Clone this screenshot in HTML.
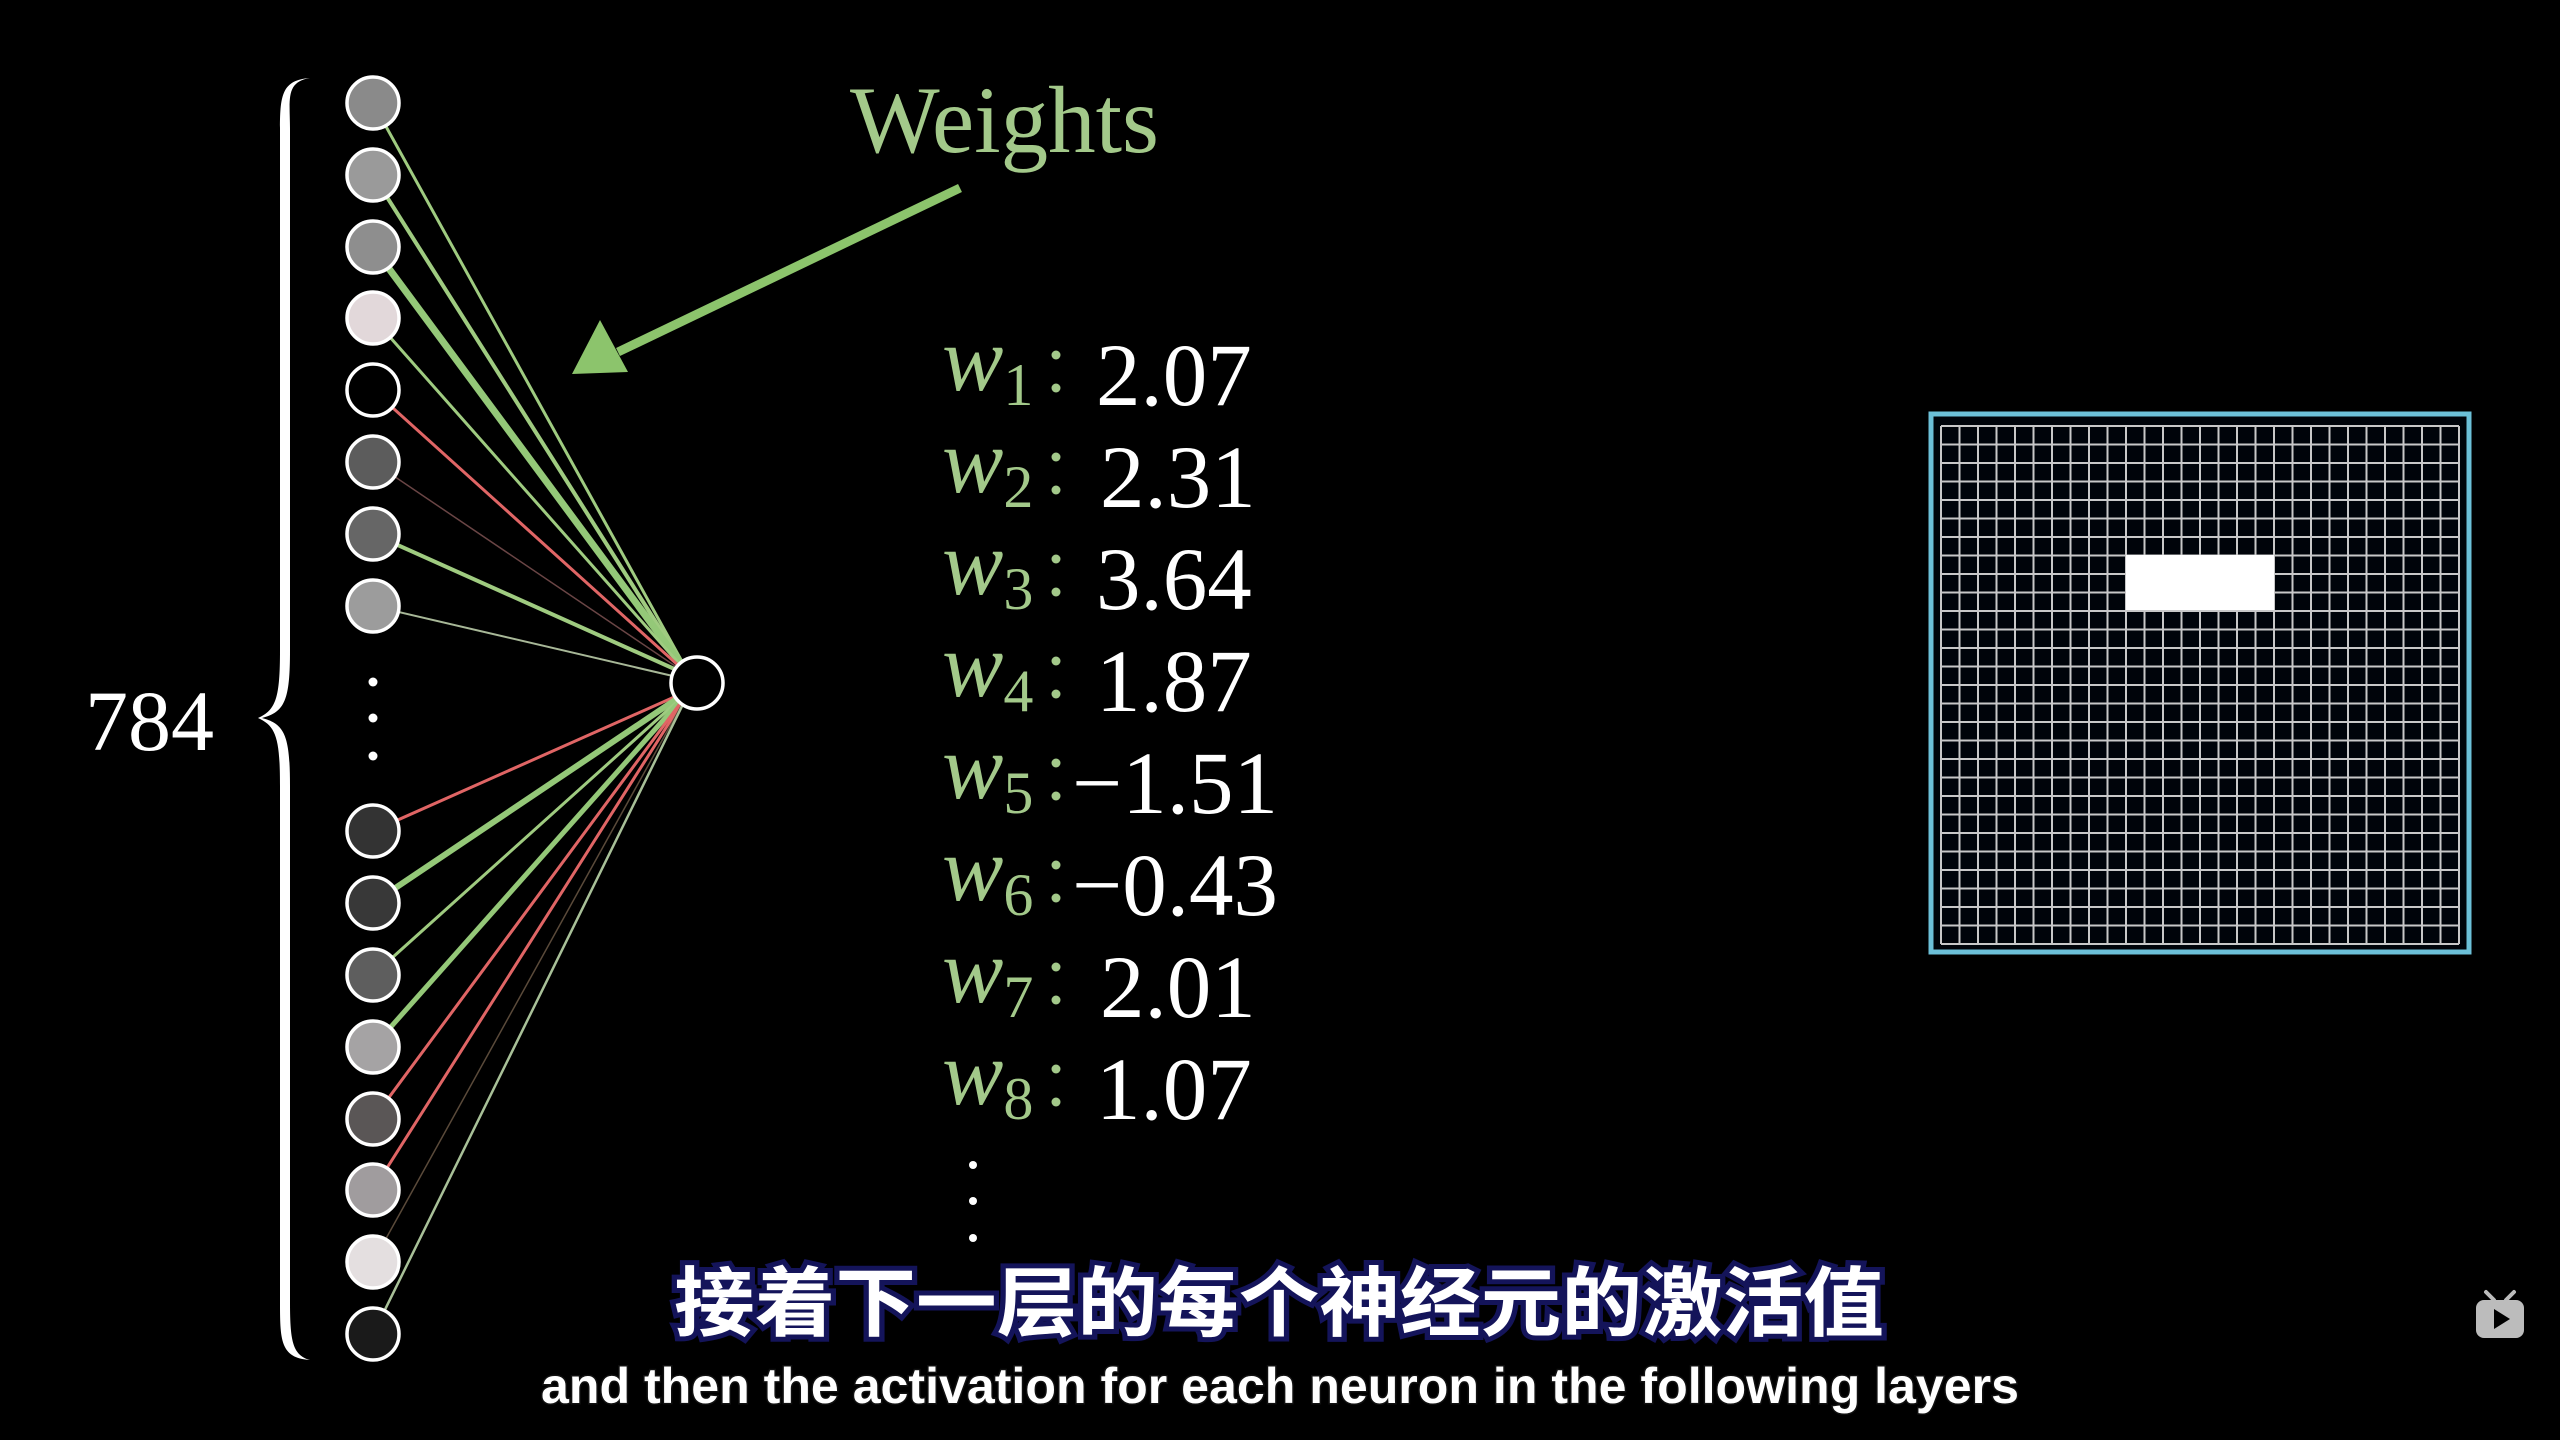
<!DOCTYPE html>
<html><head><meta charset="utf-8"><style>
html,body{margin:0;padding:0;background:#000;width:2560px;height:1440px;overflow:hidden}
svg{display:block}
</style></head><body>
<svg width="2560" height="1440" viewBox="0 0 2560 1440" xmlns="http://www.w3.org/2000/svg">
<rect width="2560" height="1440" fill="#000"/>
<path d="M310 78 C285 82 290 100 290 130 L290 650 C290 700 285 712 262 718 C285 724 290 736 290 786 L290 1300 C290 1340 292 1355 310 1360 C280 1358 280 1340 280 1300 L280 786 C280 738 276 726 258 718 C276 710 280 698 280 650 L280 130 C280 95 282 80 310 78 Z" fill="#fff"/>
<text x="85" y="750" font-family="Liberation Serif, serif" font-size="86" fill="#fff">784</text>
<g stroke-linecap="round">
<line x1="373" y1="103" x2="690" y2="676" stroke="#9fcb80" stroke-width="3"/>
<line x1="373" y1="175" x2="690" y2="676" stroke="#9fcb80" stroke-width="4"/>
<line x1="373" y1="247" x2="690" y2="676" stroke="#94c878" stroke-width="7"/>
<line x1="373" y1="318" x2="690" y2="676" stroke="#9fcb80" stroke-width="3"/>
<line x1="373" y1="390" x2="690" y2="676" stroke="#e06565" stroke-width="3"/>
<line x1="373" y1="462" x2="690" y2="676" stroke="#6a4545" stroke-width="1.5"/>
<line x1="373" y1="534" x2="690" y2="676" stroke="#9fcb80" stroke-width="4"/>
<line x1="373" y1="606" x2="690" y2="680" stroke="#a8b898" stroke-width="2"/>
<line x1="373" y1="831" x2="690" y2="690" stroke="#e06565" stroke-width="3"/>
<line x1="373" y1="903" x2="690" y2="690" stroke="#94c878" stroke-width="6"/>
<line x1="373" y1="975" x2="690" y2="690" stroke="#9fcb80" stroke-width="3"/>
<line x1="373" y1="1047" x2="690" y2="690" stroke="#94c878" stroke-width="5"/>
<line x1="373" y1="1119" x2="690" y2="690" stroke="#e06565" stroke-width="3"/>
<line x1="373" y1="1190" x2="690" y2="690" stroke="#e06565" stroke-width="3"/>
<line x1="373" y1="1262" x2="690" y2="690" stroke="#5a4a3a" stroke-width="1.5"/>
<line x1="373" y1="1334" x2="690" y2="690" stroke="#a8c098" stroke-width="2.5"/>
</g>
<g stroke="#fff" stroke-width="3.5">
<circle cx="373" cy="103" r="26" fill="#8a8a8a"/>
<circle cx="373" cy="175" r="26" fill="#9a9a9a"/>
<circle cx="373" cy="247" r="26" fill="#8e8e8e"/>
<circle cx="373" cy="318" r="26" fill="#e2d8da"/>
<circle cx="373" cy="390" r="26" fill="#000"/>
<circle cx="373" cy="462" r="26" fill="#5c5c5c"/>
<circle cx="373" cy="534" r="26" fill="#666"/>
<circle cx="373" cy="606" r="26" fill="#9c9c9c"/>
<circle cx="373" cy="831" r="26" fill="#333"/>
<circle cx="373" cy="903" r="26" fill="#383838"/>
<circle cx="373" cy="975" r="26" fill="#5e5e5e"/>
<circle cx="373" cy="1047" r="26" fill="#a5a3a4"/>
<circle cx="373" cy="1119" r="26" fill="#5a5656"/>
<circle cx="373" cy="1190" r="26" fill="#a09c9e"/>
<circle cx="373" cy="1262" r="26" fill="#e4dfe0"/>
<circle cx="373" cy="1334" r="26" fill="#1a1a1a"/>
<circle cx="697" cy="683" r="26" fill="#000"/>
</g>
<g fill="#fff"><circle cx="373" cy="682" r="4.5"/><circle cx="373" cy="718" r="4.5"/><circle cx="373" cy="756" r="4.5"/></g>
<text x="850" y="152" font-family="Liberation Serif, serif" font-size="95" fill="#a3c98a">Weights</text>
<line x1="960" y1="188" x2="618" y2="352" stroke="#8cc46c" stroke-width="9"/>
<polygon points="572,374 600,320 628,372" fill="#8cc46c"/>
<g font-family="Liberation Serif, serif" font-size="92">
<g fill="#a3c98a" font-style="italic">
<text x="942" y="390">w<tspan font-size="60" font-style="normal" dy="15">1</tspan></text>
<text x="942" y="492">w<tspan font-size="60" font-style="normal" dy="15">2</tspan></text>
<text x="942" y="594">w<tspan font-size="60" font-style="normal" dy="15">3</tspan></text>
<text x="942" y="696">w<tspan font-size="60" font-style="normal" dy="15">4</tspan></text>
<text x="942" y="798">w<tspan font-size="60" font-style="normal" dy="15">5</tspan></text>
<text x="942" y="900">w<tspan font-size="60" font-style="normal" dy="15">6</tspan></text>
<text x="942" y="1002">w<tspan font-size="60" font-style="normal" dy="15">7</tspan></text>
<text x="942" y="1104">w<tspan font-size="60" font-style="normal" dy="15">8</tspan></text>
</g>
<g fill="#a3c98a">
<circle cx="1056" cy="355" r="4.5"/><circle cx="1056" cy="388" r="4.5"/>
<circle cx="1056" cy="457" r="4.5"/><circle cx="1056" cy="490" r="4.5"/>
<circle cx="1056" cy="559" r="4.5"/><circle cx="1056" cy="592" r="4.5"/>
<circle cx="1056" cy="661" r="4.5"/><circle cx="1056" cy="694" r="4.5"/>
<circle cx="1056" cy="763" r="4.5"/><circle cx="1056" cy="796" r="4.5"/>
<circle cx="1056" cy="865" r="4.5"/><circle cx="1056" cy="898" r="4.5"/>
<circle cx="1056" cy="967" r="4.5"/><circle cx="1056" cy="1000" r="4.5"/>
<circle cx="1056" cy="1069" r="4.5"/><circle cx="1056" cy="1102" r="4.5"/>
</g>
<g fill="#fff" font-size="89">
<text x="1096" y="405">2.07</text>
<text x="1100" y="507">2.31</text>
<text x="1096" y="609">3.64</text>
<text x="1096" y="711">1.87</text>
<text x="1072" y="813">−1.51</text>
<text x="1072" y="915">−0.43</text>
<text x="1100" y="1017">2.01</text>
<text x="1096" y="1119">1.07</text>
</g>
</g>
<g fill="#fff"><circle cx="973" cy="1165" r="4"/><circle cx="973" cy="1201" r="4"/><circle cx="973" cy="1238" r="4"/></g>
<rect x="1931" y="414" width="538" height="538" fill="#00040a" stroke="#6cc0d8" stroke-width="5"/>
<g stroke="#c8c8c8" stroke-width="2">
<path d="M1941 426H2459M1941 444.5H2459M1941 463H2459M1941 481.5H2459M1941 500H2459M1941 518.5H2459M1941 537H2459M1941 555.5H2459M1941 574H2459M1941 592.5H2459M1941 611H2459M1941 629.5H2459M1941 648H2459M1941 666.5H2459M1941 685H2459M1941 703.5H2459M1941 722H2459M1941 740.5H2459M1941 759H2459M1941 777.5H2459M1941 796H2459M1941 814.5H2459M1941 833H2459M1941 851.5H2459M1941 870H2459M1941 888.5H2459M1941 907H2459M1941 925.5H2459M1941 944H2459"/>
<path d="M1941 426V944M1959.5 426V944M1978 426V944M1996.5 426V944M2015 426V944M2033.5 426V944M2052 426V944M2070.5 426V944M2089 426V944M2107.5 426V944M2126 426V944M2144.5 426V944M2163 426V944M2181.5 426V944M2200 426V944M2218.5 426V944M2237 426V944M2255.5 426V944M2274 426V944M2292.5 426V944M2311 426V944M2329.5 426V944M2348 426V944M2366.5 426V944M2385 426V944M2403.5 426V944M2422 426V944M2440.5 426V944M2459 426V944"/>
</g>
<rect x="2126" y="555" width="148" height="55" fill="#fff"/>
<text x="1279" y="1330" text-anchor="middle" font-family="Liberation Sans, Noto Sans CJK SC, sans-serif" font-weight="bold" font-size="76" fill="#fff" stroke="#14145a" stroke-width="10" paint-order="stroke" textLength="1210" lengthAdjust="spacingAndGlyphs">接着下一层的每个神经元的激活值</text>
<text x="1280" y="1403" text-anchor="middle" font-family="Liberation Sans, sans-serif" font-weight="bold" font-size="50" fill="#fff" stroke="#111" stroke-width="3" paint-order="stroke" textLength="1478" lengthAdjust="spacingAndGlyphs">and then the activation for each neuron in the following layers</text>
<g fill="#ddd" opacity="0.85">
<rect x="2476" y="1300" width="48" height="38" rx="8"/>
<path d="M2486 1292 L2494 1300 M2514 1292 L2506 1300" stroke="#ddd" stroke-width="4" stroke-linecap="round"/>
<polygon points="2494,1309 2494,1329 2510,1319" fill="#000"/>
</g>
</svg>
</body></html>
